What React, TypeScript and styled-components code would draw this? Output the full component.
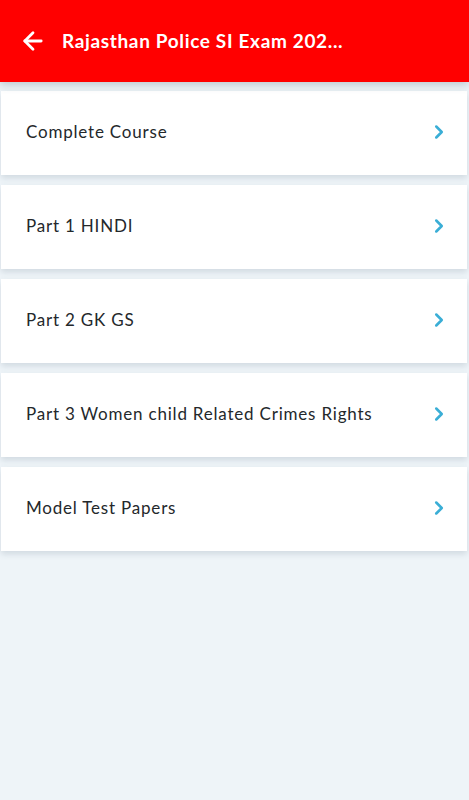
import { ArrowLeft, ChevronRight } from "lucide-react";
import styled, { createGlobalStyle } from "styled-components";

const GlobalStyle = createGlobalStyle`
  html, body {
    margin: 0;
    padding: 0;
    background: #eef4f8;
    font-family: Lato, "Open Sans", sans-serif;
  }
`;

const Screen = styled.div`
  width: 469px;
  min-height: 800px;
  background: #eef4f8;
  display: flex;
  flex-direction: column;
`;

const Header = styled.header`
  height: 82px;
  background: #ff0000;
  display: flex;
  align-items: center;
  padding: 0 0 0 19px;
  gap: 15px;
  color: #fff;
  box-sizing: border-box;
  position: relative;
  z-index: 2;
  box-shadow: 0 3px 8px rgba(70, 90, 110, 0.28);
`;

const BackButton = styled.button`
  background: none;
  border: none;
  padding: 0;
  color: #fff;
  display: flex;
  align-items: center;
  margin-top: -1px;
`;

const Title = styled.h1`
  margin: 0;
  font-size: 19px;
  font-weight: 700;
  letter-spacing: 0.65px;
  margin-top: -1px;
`;

const List = styled.div`
  display: flex;
  flex-direction: column;
  gap: 10px;
  padding: 9px 2px 0 1px;
`;

const Card = styled.div`
  height: 84px;
  background: #fff;
  display: flex;
  align-items: center;
  justify-content: space-between;
  padding: 0 17px 0 25px;
  box-shadow: 0 3px 6px rgba(80, 100, 120, 0.18);
`;

const Label = styled.span`
  font-size: 17px;
  color: #24282b;
  letter-spacing: 0.8px;
  margin-top: -4px;
`;

const Arrow = styled(ChevronRight)`
  color: #3aaed6;
  margin-top: -2px;
`;

const items = [
  "Complete Course",
  "Part 1 HINDI",
  "Part 2 GK GS",
  "Part 3 Women child Related Crimes Rights",
  "Model Test Papers",
];

const App = () => {
  return (
    <>
      <GlobalStyle />
      <Screen>
        <Header>
          <BackButton>
            <ArrowLeft size={28} strokeWidth={2.4} />
          </BackButton>
          <Title>Rajasthan Police SI Exam 202...</Title>
        </Header>
        <List>
          {items.map((item, index) => (
            <Card key={index}>
              <Label>{item}</Label>
              <Arrow size={22} strokeWidth={2.8} />
            </Card>
          ))}
        </List>
      </Screen>
    </>
  );
};

export default App;
